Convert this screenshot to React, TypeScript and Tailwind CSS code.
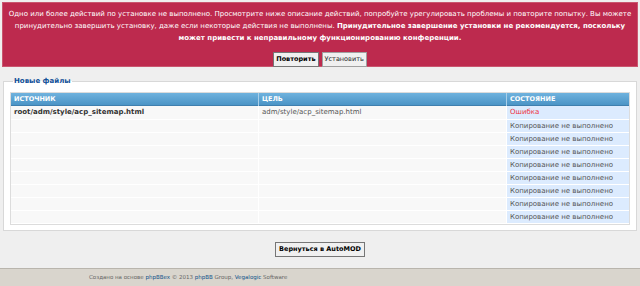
const rows = [
  { src: "root/adm/style/acp_sitemap.html", dst: "adm/style/acp_sitemap.html", status: "Ошибка", error: true },
  ...Array.from({ length: 8 }, () => ({ src: "", dst: "", status: "Копирование не выполнено", error: false })),
];

const App = () => {
  return (
    <div className="w-[640px] h-[286px] overflow-hidden bg-[#efefef] font-['DejaVu_Sans',Verdana,sans-serif] flex flex-col">
      {/* error box */}
      <div className="mx-[2px] mt-[2px] h-[65px] shrink-0 bg-[#bd2a4e] border border-[#c9566f] text-white text-[7px] leading-[12px] text-center pt-[5px] px-[4px]">
        <p>
          Одно или более действий по установке не выполнено. Просмотрите ниже описание действий, попробуйте урегулировать
          проблемы и повторите попытку. Вы можете принудительно завершить установку, даже если некоторые действия не
          выполнены. <b>Принудительное завершение установки не рекомендуется, поскольку может привести к неправильному
          функционированию конференции.</b>
        </p>
        <div className="flex justify-center gap-[3px] mt-[8px]">
          <button className="h-[15px] px-[2px] bg-[#f0f0f0] border border-[#767676] text-black font-bold text-[6.5px] leading-none">
            Повторить
          </button>
          <button className="h-[15px] px-[2px] bg-[#f0f0f0] border border-[#a0a0a0] text-[#222] text-[6.5px] leading-none">
            Установить
          </button>
        </div>
      </div>

      {/* fieldset */}
      <fieldset className="mx-[3px] mt-[9px] h-[155px] shrink-0 bg-white border border-[#d8d8d8] px-[6px]">
        <legend className="ml-[3px] px-[1px] text-[7px] font-bold text-[#115098] leading-[10px]">Новые файлы</legend>
        <div className="mt-[6px] border border-[#dcdcdc] text-[7px]">
          <div className="grid grid-cols-[248px_248px_1fr] h-[13px] bg-gradient-to-b from-[#6fb2de] to-[#4b94c6] text-white font-bold text-[6.5px] leading-[13px] border-b border-[#3f7fae]">
            <div className="pl-[3px] border-r border-[#a9cfe9]">ИСТОЧНИК</div>
            <div className="pl-[3px] border-r border-[#a9cfe9]">ЦЕЛЬ</div>
            <div className="pl-[3px]">СОСТОЯНИЕ</div>
          </div>
          {rows.map((r, i) => (
            <div
              key={i}
              className={`grid grid-cols-[248px_248px_1fr] ${i === 0 ? "h-[14px] leading-[13px]" : "h-[13px] leading-[12px]"} border-b border-white overflow-hidden`}
            >
              <div className="pl-[3px] bg-[#f8f8f8] border-r border-white font-bold text-[#333]">{r.src}</div>
              <div className="pl-[3px] bg-[#f8f8f8] border-r border-white text-[#555]">{r.dst}</div>
              <div className={`pl-[3px] bg-[#dcebfe] whitespace-nowrap ${r.error ? "text-[#ee3344]" : "text-[#555]"}`}>
                {r.status}
              </div>
            </div>
          ))}
        </div>
      </fieldset>

      <div className="flex justify-center mt-[11px]">
        <button className="h-[15px] px-[3px] bg-[#f0f0f0] border border-[#767676] text-black font-bold text-[6.5px] leading-none">
          Вернуться в AutoMOD
        </button>
      </div>

      <div className="mt-auto h-[18px] shrink-0 bg-[#d9d5cd] border-t border-[#b9b5ad] text-[5.5px] leading-[16px] text-[#666] pl-[89px]">
        Создано на основе <span className="text-[#105289]">phpBBex</span> © 2013 <span className="text-[#105289]">phpBB</span>{" "}
        Group, <span className="text-[#105289]">Vegalogic</span> Software
      </div>
    </div>
  );
};

export default App;
